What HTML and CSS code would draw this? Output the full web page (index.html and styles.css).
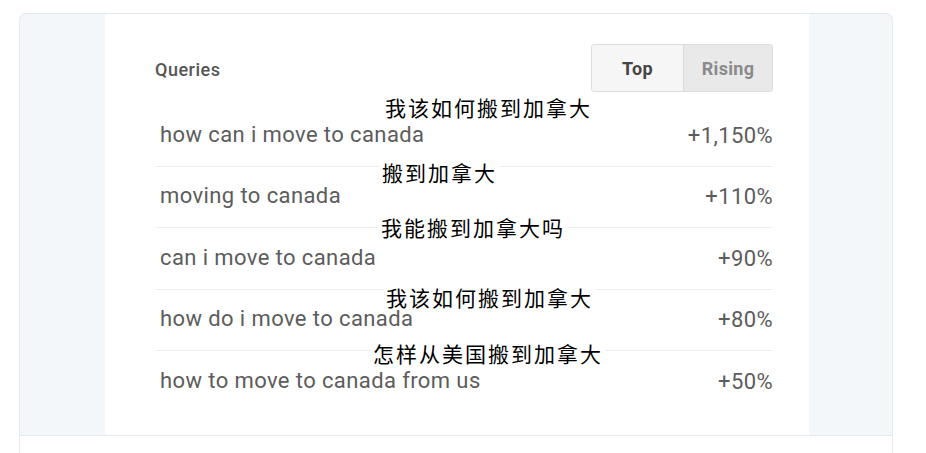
FILE: index.html
```html
<!DOCTYPE html>
<html lang="en">
<head>
    <meta charset="UTF-8">
    <meta name="viewport" content="width=device-width, initial-scale=1.0">
    <title>Related queries</title>
    <link rel="stylesheet" href="styles.css">
</head>
<body>
    <div class="card">
        <div class="panel">
            <div class="panel-head">
                <span class="title">Queries</span>
                <div class="toggle">
                    <button class="toggle-btn">Top</button>
                    <button class="toggle-btn active">Rising</button>
                </div>
            </div>

            <ul class="rows">
                <li class="row">
                    <span class="zh">我该如何搬到加拿大</span>
                    <span class="query">how can i move to canada</span>
                    <span class="value">+1,150%</span>
                </li>
                <li class="row">
                    <span class="zh">搬到加拿大</span>
                    <span class="query">moving to canada</span>
                    <span class="value">+110%</span>
                </li>
                <li class="row">
                    <span class="zh">我能搬到加拿大吗</span>
                    <span class="query">can i move to canada</span>
                    <span class="value">+90%</span>
                </li>
                <li class="row">
                    <span class="zh">我该如何搬到加拿大</span>
                    <span class="query">how do i move to canada</span>
                    <span class="value">+80%</span>
                </li>
                <li class="row">
                    <span class="zh">怎样从美国搬到加拿大</span>
                    <span class="query">how to move to canada from us</span>
                    <span class="value">+50%</span>
                </li>
            </ul>
        </div>
        <div class="card-foot"></div>
    </div>
</body>
</html>
```

FILE: styles.css
```css
body {
    margin: 0;
    background: #fff;
    font-family: Roboto, "Liberation Sans", sans-serif;
}
.card {
    margin: 13px 0 0 19px;
    width: 872px;
    border: 1px solid #e4e9ee;
    border-bottom: none;
    border-radius: 7px 7px 0 0;
    background: #f4f7fa;
}
.panel {
    margin: 0 83px 0 85px;
    height: 421px;
    padding: 30px 36px 0 50px;
    box-sizing: border-box;
    background: #fff;
}
.panel-head {
    display: flex;
    justify-content: space-between;
    align-items: center;
}
.title {
    font-size: 18px;
    font-weight: 500;
    letter-spacing: 0.5px;
    color: #555;
    margin-top: 3px;
}
.toggle {
    display: flex;
    border: 1px solid #dcdcdc;
    border-radius: 3px;
    overflow: hidden;
}
.toggle-btn {
    height: 46px;
    border: none;
    font-family: inherit;
    font-size: 18px;
    font-weight: 700;
    letter-spacing: 0.3px;
    color: #454545;
    background: #f6f6f6;
    width: 91px;
}
.toggle-btn.active {
    width: 89px;
    color: #8a8a8a;
    background: #e9e9e9;
    border-left: 1px solid #dcdcdc;
}
.rows {
    list-style: none;
    margin: 13px 0 0;
    padding: 0;
}
.row {
    position: relative;
    display: flex;
    justify-content: space-between;
    align-items: center;
    height: 61.5px;
    box-sizing: border-box;
    padding: 0 0 2px 5px;
    border-bottom: 1px solid #eeeeee;
    font-size: 22px;
    letter-spacing: 0.4px;
    color: #5c5c5c;
}
.row:last-child {
    border-bottom: none;
}
.value {
    margin-top: 2px;
}
.zh {
    position: absolute;
    padding: 0 2px;
    background: #fff;
    font-family: "Noto Sans CJK SC", sans-serif;
    font-size: 21px;
    line-height: 24px;
    letter-spacing: 2px;
    color: #000;
}
.row:nth-child(1) .zh { top: -10px; left: 228px; }
.row:nth-child(2) .zh { top: -7px; left: 225px; }
.row:nth-child(3) .zh { top: -13px; left: 224px; }
.row:nth-child(4) .zh { top: -5px; left: 229px; }
.row:nth-child(5) .zh { top: -10px; left: 216px; }
.card-foot {
    height: 20px;
    background: #fff;
    border-top: 1px solid #e6eaee;
}
```
